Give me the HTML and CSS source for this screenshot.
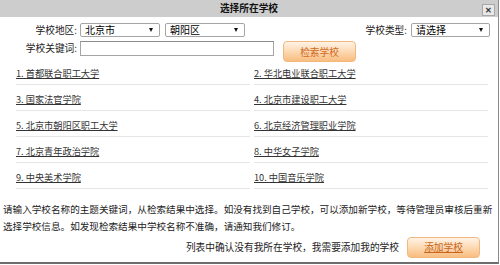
FILE: index.html
```html
<!DOCTYPE html>
<html lang="zh-CN">
<head>
    <meta charset="UTF-8">
    <title>选择所在学校</title>
    <link rel="stylesheet" href="styles.css">
</head>
<body>
    <div class="dialog">
        <div class="titlebar">
            <span class="title">选择所在学校</span>
            <span class="close">✕</span>
        </div>

        <div class="form-row">
            <label class="label">学校地区:</label>
            <span class="select w80"><select><option>北京市</option></select></span>
            <span class="select w80"><select><option>朝阳区</option></select></span>
            <label class="label type-label">学校类型:</label>
            <span class="select w79"><select><option>请选择</option></select></span>
        </div>
        <div class="form-row row-keyword">
            <label class="label">学校关键词:</label>
            <input type="text" class="keyword">
            <button class="btn search-btn">检索学校</button>
        </div>

        <ul class="school-list">
            <li><a href="#">1. 首都联合职工大学</a></li>
            <li><a href="#">2. 华北电业联合职工大学</a></li>
            <li><a href="#">3. 国家法官学院</a></li>
            <li><a href="#">4. 北京市建设职工大学</a></li>
            <li><a href="#">5. 北京市朝阳区职工大学</a></li>
            <li><a href="#">6. 北京经济管理职业学院</a></li>
            <li><a href="#">7. 北京青年政治学院</a></li>
            <li><a href="#">8. 中华女子学院</a></li>
            <li><a href="#">9. 中央美术学院</a></li>
            <li><a href="#">10. 中国音乐学院</a></li>
        </ul>

        <p class="tips">请输入学校名称的主题关键词，从检索结果中选择。如没有找到自己学校，可以添加新学校，等待管理员审核后重新选择学校信息。如发现检索结果中学校名称不准确，请通知我们修订。</p>
        <div class="add-row">
            <span>列表中确认没有我所在学校，我需要添加我的学校</span>
            <button class="btn add-btn">添加学校</button>
        </div>
    </div>
</body>
</html>
```

FILE: styles.css
```css
body {
    margin: 0;
    background-color: #fff;
    font-family: "Noto Sans CJK SC", "Noto Sans", sans-serif;
    font-size: 9.7px;
    color: #222;
}
.dialog {
    width: 498px;
    height: 262px;
    border-right: 1px solid #8a8a8a;
    border-bottom: 2px solid #6e6e6e;
    background-color: #fff;
    overflow: hidden;
}
.titlebar {
    height: 17px;
    background-color: #cdcdcd;
    display: flex;
    align-items: center;
    justify-content: center;
    position: relative;
}
.title {
    font-weight: bold;
    color: #111;
    line-height: 17px;
}
.close {
    position: absolute;
    right: 3px;
    top: 4px;
    width: 11px;
    height: 10px;
    border: 1px solid #a8a8a8;
    background-color: #e8e8e8;
    font-size: 8px;
    font-weight: bold;
    line-height: 10px;
    text-align: center;
    color: #333;
}
.form-row {
    display: flex;
    align-items: center;
    margin-top: 6px;
    height: 14px;
}
.row-keyword {
    margin-top: 4px;
    align-items: flex-start;
    height: 18px;
}
.label {
    width: 77px;
    text-align: right;
    margin-right: 3px;
    color: #222;
    line-height: 14px;
}
.type-label {
    width: auto;
    margin-left: auto;
    margin-right: 4px;
}
.select {
    position: relative;
    display: block;
    height: 14px;
    margin-right: 5px;
}
.w80 { width: 80px; }
.w79 { width: 79px; margin-right: 8px; }
.select select {
    appearance: none;
    -webkit-appearance: none;
    width: 100%;
    height: 14px;
    margin: 0;
    padding: 0 0 0 4px;
    border: 1px solid #a5a5a5;
    border-radius: 2px;
    background-color: #fff;
    font-family: inherit;
    font-size: 10px;
    line-height: 12px;
    color: #000;
    box-sizing: border-box;
}
.select::after {
    content: "";
    position: absolute;
    right: 7px;
    top: 5px;
    border-left: 2.5px solid transparent;
    border-right: 2.5px solid transparent;
    border-top: 4px solid #111;
}
.keyword {
    width: 194px;
    height: 15px;
    margin: 0;
    padding: 0 3px;
    border: 1px solid #a5a5a5;
    border-top-color: #8c8c8c;
    box-sizing: border-box;
}
.btn {
    width: 73px;
    height: 21px;
    padding: 0;
    border: 1px solid #f2b77c;
    border-radius: 4px;
    background: linear-gradient(#fff3e6, #fcd6ad 55%, #f8bd80);
    font-family: inherit;
    font-size: 9.7px;
    color: #d2691e;
    cursor: pointer;
}
.search-btn {
    margin-left: 9px;
}
.add-btn {
    text-decoration: underline;
    color: #c8661c;
}
.school-list {
    list-style: none;
    margin: 0;
    padding: 0 10px 0 16px;
    display: grid;
    grid-template-columns: 1fr 1fr;
    column-gap: 4px;
}
.school-list li {
    height: 26px;
    padding-top: 8px;
    box-sizing: border-box;
    border-bottom: 1px solid #e6e6e6;
    line-height: 12px;
}
.school-list a {
    color: #333;
    font-size: 9.2px;
    text-decoration: underline;
}
.tips {
    margin: 12px 0 0;
    padding: 0 1px 0 3px;
    font-size: 9.6px;
    line-height: 17px;
    color: #222;
}
.add-row {
    display: flex;
    justify-content: flex-end;
    align-items: center;
    gap: 8px;
    height: 22px;
    margin-top: 1px;
    padding-right: 18px;
    color: #222;
}
```
